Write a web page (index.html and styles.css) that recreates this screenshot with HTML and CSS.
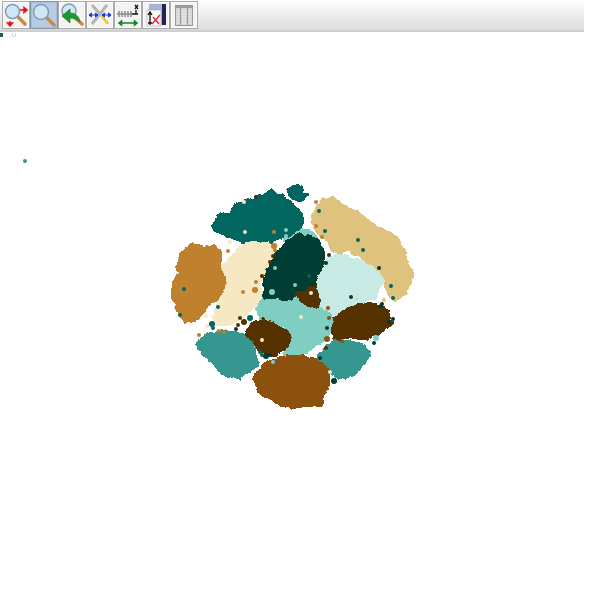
FILE: index.html
```html
<!DOCTYPE html>
<html lang="en">
<head>
<meta charset="utf-8">
<title>Scatter plot viewer</title>
<link rel="stylesheet" href="styles.css">
</head>
<body>
<div class="app">
  <div class="toolbar">
    <button class="tool">
      <svg viewBox="0 0 24 24" class="ico"><path class="handle" d="M13 13l8 8"/><circle class="lens" cx="8.500" cy="8.500" r="7"/><path class="red" d="M16 7h4M20 4.500l3 2.500-3 2.500zM6 18v3M3.500 20l2.500 3 2.500-3z"/></svg>
    </button>
    <button class="tool active">
      <svg viewBox="0 0 24 24" class="ico"><path class="handle" d="M14 14l8 8"/><circle class="lens" cx="9" cy="9" r="7.500"/></svg>
    </button>
    <button class="tool">
      <svg viewBox="0 0 24 24" class="ico"><path class="handle" d="M15 15l7 6"/><circle class="lens" cx="9" cy="8" r="7"/><path class="greenfill" d="M2 13l8-7v4c5 0 9 3 10 9-3-3-5-4-10-4v5z"/></svg>
    </button>
    <button class="tool">
      <svg viewBox="0 0 24 24" class="ico"><path class="tools" d="M4 2l7 8M19 2L4 21"/><path class="yellow" d="M13 12l7 9"/><path class="blue" d="M1 12h9M14 12h9M1 12l2.500-2v4zM10 12l-2.500-2v4zM14 12l2.500-2v4zM23 12l-2.500-2v4z"/></svg>
    </button>
    <button class="tool">
      <svg viewBox="0 0 24 24" class="ico"><path class="ruler" d="M1 11h15M3 8v6M6 8v6M9 8v6M12 8v6M15 8v6"/><path class="black" d="M16 11h6M19 2l3 4M22 2l-3 4M20 7v4"/><path class="green" d="M3 20h18M3 20l2.500-2v4zM21 20l-2.500-2v4z"/></svg>
    </button>
    <button class="tool">
      <svg viewBox="0 0 24 24" class="ico"><path class="disk" d="M5 1h17v21H5z"/><path class="diskdark" d="M18 1h4v21h-4z"/><path class="disklabel" d="M3 7h14v16H3z"/><path class="black" d="M6 22V10M4 12l2-3 2 3M4 20h4"/><path class="redline" d="M8 21l8-9M9 14l6 7"/></svg>
    </button>
    <button class="tool">
      <svg viewBox="0 0 24 24" class="ico"><path class="tablebg" d="M3 2h18v21H3z"/><path class="tablehead" d="M3 2h18v3H3zM3 2h1v21H3zM8 2h1v21H8zM15 2h1v21h-1zM20 2h1v21h-1zM3 22h18v1H3z"/><path class="tablerows" d="M5 8h2M10 8h4M17 8h2M5 11h2M10 11h4M17 11h2M5 14h2M10 14h4M17 14h2M5 17h2M10 17h4M17 17h2M5 20h2M10 20h4M17 20h2"/></svg>
    </button>
  </div>
  <div class="caption"><span class="mark"></span><span class="caption-text">. . U</span></div>
  <svg class="plot" viewBox="0 38 584 562" xmlns="http://www.w3.org/2000/svg">
    <defs>
      <filter id="rough" x="-10%" y="-10%" width="120%" height="120%">
        <feTurbulence type="fractalNoise" baseFrequency="0.16" numOctaves="2" seed="4"/>
        <feDisplacementMap in="SourceGraphic" scale="5" xChannelSelector="R" yChannelSelector="G"/>
      </filter>
    </defs>
    <circle class="c7" cx="25" cy="161" r="2"/>
    <g class="blobs">
      <polygon class="c6" points="290,228 310,232 318,240 300,245 285,240"/>
      <polygon class="c9" points="288,190 295,186 302,187 302,195 306,195 300,200 293,198"/>
      <polygon class="c8" points="213,227 218,217 232,213 237,205 252,200 272,192 285,198 295,208 302,215 302,223 298,228 288,235 275,240 262,243 245,242 228,235 215,230"/>
      <polygon class="c2" points="182,253 193,245 205,248 215,247 220,255 218,265 222,270 228,280 230,288 223,295 220,297 208,305 198,318 185,321 180,313 173,297 173,283 180,273 178,265"/>
      <polygon class="c4" points="240,248 252,243 275,245 273,257 265,270 258,290 265,297 255,305 240,318 227,325 213,323 215,312 222,297 230,283 223,267 233,257"/>
      <polygon class="c3" points="313,217 320,202 332,198 345,208 358,213 368,222 382,230 395,237 405,252 405,258 412,272 410,283 405,293 395,300 387,290 385,277 372,265 358,255 348,248 342,252 332,250 330,242 318,232 313,223"/>
      <polygon class="c5" points="318,277 328,260 338,255 355,260 372,268 383,280 378,288 375,298 358,302 342,312 330,315 318,303 318,293"/>
      <polygon class="c6" points="258,308 265,297 285,297 298,298 318,307 330,315 332,328 323,340 315,345 298,357 285,357 285,350 292,338 285,325 262,320"/>
      <polygon class="c10" points="265,297 265,277 275,257 285,245 298,235 317,240 323,252 323,262 315,278 315,288 302,293 290,298"/>
      <polygon class="c1" points="298,295 315,287 318,300 318,307 305,303"/>
      <polygon class="c1" points="333,332 335,318 347,310 362,305 377,305 388,313 392,323 378,333 365,338 348,337 335,338"/>
      <polygon class="c7" points="197,342 208,335 222,332 238,334 250,337 253,345 257,365 245,373 240,378 222,373 213,362 202,352"/>
      <polygon class="c1" points="247,335 250,327 262,320 272,323 287,332 290,340 283,350 272,355 260,350 255,340"/>
      <polygon class="c7" points="318,355 335,342 348,342 362,345 370,355 363,363 353,375 340,378 328,370 322,362"/>
      <polygon class="c0" points="255,378 265,365 278,358 295,357 302,357 315,360 328,370 328,387 322,395 320,405 302,405 293,408 285,405 280,405 272,398 260,393"/>
    </g>
    <g class="dots">
      <circle class="c1" cx="256" cy="197" r="2"/><circle class="c4" cx="244" cy="202" r="2"/><circle class="c4" cx="245" cy="232" r="2"/><circle class="c2" cx="274" cy="232" r="2"/>
      <circle class="c6" cx="286" cy="230" r="2"/><circle class="c6" cx="286" cy="236" r="2"/><circle class="c4" cx="230" cy="242" r="2"/><circle class="c2" cx="228" cy="251" r="2"/>
      <circle class="c2" cx="274" cy="246" r="3"/><circle class="c1" cx="273" cy="256" r="2"/><circle class="c1" cx="270" cy="262" r="2"/><circle class="c2" cx="275" cy="250" r="2"/>
      <circle class="c9" cx="184" cy="289" r="2"/><circle class="c2" cx="243" cy="292" r="2"/><circle class="c2" cx="255" cy="290" r="3"/><circle class="c6" cx="275" cy="268" r="2"/>
      <circle class="c6" cx="272" cy="292" r="3"/><circle class="c6" cx="295" cy="285" r="2"/><circle class="c2" cx="256" cy="282" r="2"/><circle class="c1" cx="262" cy="276" r="2"/>
      <circle class="c2" cx="316" cy="202" r="2"/><circle class="c9" cx="319" cy="211" r="2"/><circle class="c2" cx="316" cy="226" r="2"/><circle class="c2" cx="322" cy="237" r="2"/>
      <circle class="c8" cx="325" cy="231" r="2"/><circle class="c9" cx="358" cy="240" r="2"/><circle class="c8" cx="363" cy="250" r="2"/><circle class="c1" cx="329" cy="255" r="2"/>
      <circle class="c10" cx="326" cy="263" r="2"/><circle class="c3" cx="357" cy="299" r="1"/><circle class="c10" cx="379" cy="268" r="2"/>
      <circle class="c8" cx="309" cy="276" r="2"/><circle class="c4" cx="311" cy="293" r="2"/><circle class="c9" cx="391" cy="286" r="2"/><circle class="c8" cx="393" cy="298" r="2"/>
      <circle class="c8" cx="180" cy="315" r="2"/><circle class="c9" cx="218" cy="307" r="2"/><circle class="c4" cx="206" cy="316" r="2"/><circle class="c4" cx="207" cy="326" r="2"/>
      <circle class="c8" cx="212" cy="324" r="3"/><circle class="c8" cx="213" cy="328" r="2"/><circle class="c2" cx="199" cy="335" r="2"/><circle class="c2" cx="219" cy="331" r="2"/>
      <circle class="c2" cx="224" cy="332" r="2"/><circle class="c10" cx="236" cy="329" r="2"/><circle class="c1" cx="244" cy="322" r="3"/><circle class="c1" cx="240" cy="318" r="2"/>
      <circle class="c9" cx="250" cy="318" r="3"/><circle class="c1" cx="238" cy="325" r="2"/><circle class="c4" cx="262" cy="340" r="2"/><circle class="c8" cx="260" cy="352" r="2"/>
      <circle class="c10" cx="266" cy="356" r="3"/><circle class="c10" cx="270" cy="355" r="2"/><circle class="c6" cx="273" cy="362" r="2"/><circle class="c8" cx="262" cy="355" r="2"/>
      <circle class="c10" cx="351" cy="297" r="2"/><circle class="c10" cx="382" cy="304" r="2"/><circle class="c10" cx="381" cy="306" r="2"/><circle class="c3" cx="384" cy="300" r="2"/>
      <circle class="c10" cx="389" cy="322" r="2"/><circle class="c10" cx="393" cy="319" r="2"/><circle class="c6" cx="376" cy="338" r="3"/><circle class="c10" cx="374" cy="343" r="2"/>
      <circle class="c0" cx="328" cy="308" r="2"/><circle class="c0" cx="329" cy="318" r="2"/><circle class="c10" cx="327" cy="328" r="2"/><circle class="c0" cx="327" cy="339" r="3"/>
      <circle class="c1" cx="326" cy="348" r="2"/><circle class="c10" cx="320" cy="358" r="2"/><circle class="c5" cx="330" cy="372" r="2"/><circle class="c10" cx="334" cy="381" r="3"/>
      <circle class="c4" cx="301" cy="317" r="2"/><circle class="c0" cx="342" cy="341" r="2"/>
    </g>
  </svg>
</div>
</body>
</html>
```
FILE: styles.css
```css
html, body { margin: 0; padding: 0; background: #fff; }
.app { width: 584px; height: 600px; display: flex; flex-direction: column; overflow: hidden; font-family: "Liberation Sans", sans-serif; }
.toolbar { height: 30px; flex: none; display: flex; padding-left: 2px; align-items: flex-start; background: linear-gradient(#ffffff, #dcdcdc); border-bottom: 2px solid; border-image: linear-gradient(#efefef 50%, #cfcfcf 50%) 1; }
.tool { width: 28px; height: 28px; margin-top: 1px; padding: 0; display: flex; align-items: center; justify-content: center; box-sizing: border-box; background: #f3f3f3; border: 1px solid #a9a9a9; box-shadow: inset 0 0 0 1px #fdfdfd; }
.tool.active { background: #b6cce4; border-color: #8496ab; box-shadow: inset 0 0 0 1px #a9bfd8; }
.ico { width: 24px; height: 24px; display: block; fill: none; }
.caption { height: 6px; flex: none; display: flex; align-items: center; gap: 2px; font-size: 6px; line-height: 6px; color: #a8b0b0; }
.mark { width: 3px; height: 4px; background: #1d5a55; }
.caption-text { white-space: nowrap; }
.plot { width: 584px; height: 562px; flex: none; display: block; }
.blobs { filter: url(#rough); shape-rendering: crispEdges; stroke-width: 4; stroke-linejoin: round; }
.dots circle { stroke: none; }
.lens { fill: #cfe6f5; stroke: #7f9db5; stroke-width: 1.500; }
.handle { stroke: #c98b3d; stroke-width: 3.500; stroke-linecap: round; }
.red { stroke: #e41414; stroke-width: 1.500; fill: #e41414; }
.greenfill { fill: #1c9a2e; stroke: #0d6b1c; stroke-width: .6; }
.tools { stroke: #b4b4b4; stroke-width: 3; }
.yellow { stroke: #e7c43a; stroke-width: 2.500; }
.blue { stroke: #1a3be0; stroke-width: 1; fill: #1a3be0; }
.ruler { stroke: #8d8d8d; stroke-width: 1.500; }
.black { stroke: #111; stroke-width: 1.300; }
.green { stroke: #0e8a24; stroke-width: 1.600; fill: #0e8a24; }
.disk { fill: #a9b3d8; }
.diskdark { fill: #20254f; }
.disklabel { fill: #f6f6f6; stroke: #999; stroke-width: .5; }
.redline { stroke: #e0202a; stroke-width: 1.200; }
.tablebg { fill: #d4d4d4; }
.tablehead { fill: #9a9a9a; }
.tablerows { stroke: #efefef; stroke-width: 1.200; }
.c0 { fill: #8c510a; stroke: #8c510a; }
.c1 { fill: #543005; stroke: #543005; }
.c2 { fill: #bf812d; stroke: #bf812d; }
.c3 { fill: #dfc27d; stroke: #dfc27d; }
.c4 { fill: #f6e8c3; stroke: #f6e8c3; }
.c5 { fill: #c7eae5; stroke: #c7eae5; }
.c6 { fill: #80cdc1; stroke: #80cdc1; }
.c7 { fill: #35978f; stroke: #35978f; stroke-width: 0; }
.blobs .c7 { stroke-width: 4; }
.c8 { fill: #01665e; stroke: #01665e; }
.c9 { fill: #01665e; stroke: #01665e; }
.c10 { fill: #003c30; stroke: #003c30; }
```
